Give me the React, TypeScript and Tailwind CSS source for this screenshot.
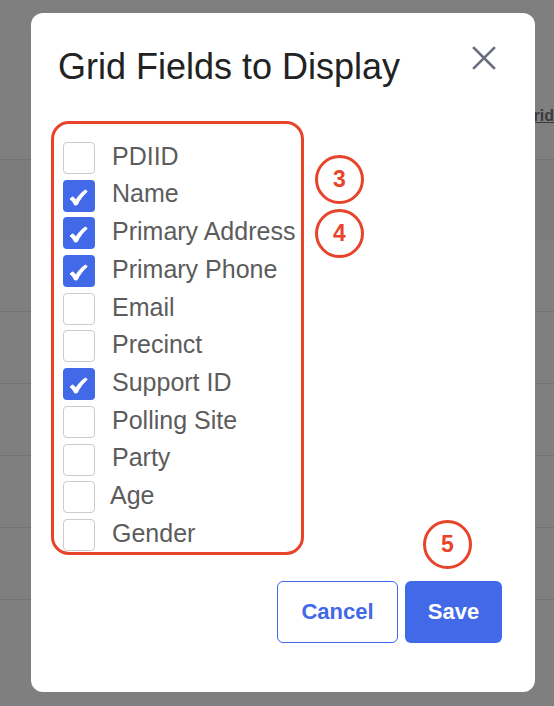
import React, { useState } from 'react';

interface Field {
  label: string;
  checked: boolean;
}

const INITIAL_FIELDS: Field[] = [
  { label: "PDIID", checked: false },
  { label: "Name", checked: true },
  { label: "Primary Address", checked: true },
  { label: "Primary Phone", checked: true },
  { label: "Email", checked: false },
  { label: "Precinct", checked: false },
  { label: "Support ID", checked: true },
  { label: "Polling Site", checked: false },
  { label: "Party", checked: false },
  { label: "Age", checked: false },
  { label: "Gender", checked: false },
];

// brush-style check mark
const CheckMark = () => (
  <svg width="19" height="17" viewBox="0 0 19 17" fill="white" stroke="white" strokeWidth="1" strokeLinejoin="round">
    <path d="M1 10 C2 8.6 3.2 7.9 4 8 C5 8.3 6 9.9 6.8 11.2 C9.2 7.2 12.6 3.2 16.6 0.9 L18.2 2.6 C14 6.2 10.5 11 8.2 15.8 L5.6 16 C4.6 13.6 2.8 11.4 1 10 Z" />
  </svg>
);

const Badge: React.FC<{ n: number; className: string }> = ({ n, className }) => (
  <div
    className={`absolute w-[49px] h-[49px] rounded-full border-[3.5px] border-[#e8432b] flex items-center justify-center text-[23px] font-bold text-[#e8432b] leading-none ${className}`}
  >
    {n}
  </div>
);

export default function App() {
  const [fields, setFields] = useState<Field[]>(INITIAL_FIELDS);

  const toggle = (idx: number) => {
    const next = [...fields];
    next[idx] = { ...next[idx], checked: !next[idx].checked };
    setFields(next);
  };

  return (
    <div className="relative h-[706px] w-full overflow-hidden bg-white font-['Liberation_Sans',Arial,sans-serif]">
      {/* page behind the dialog */}
      <div className="h-[160px] border-b border-[#e6e6e6] pt-[104px] flex justify-end whitespace-nowrap">
        <span className="text-[16px] leading-[24px] font-bold text-[#747474] underline">Grid</span>
      </div>
      <div className="h-[80px] bg-[#f9f9f9]" />
      <div className="h-[72px] border-b border-[#e6e6e6]" />
      <div className="h-[72px] border-b border-[#e6e6e6]" />
      <div className="h-[72px] border-b border-[#e6e6e6]" />
      <div className="h-[72px] border-b border-[#e6e6e6]" />
      <div className="h-[72px] border-b border-[#e6e6e6]" />

      {/* backdrop */}
      <div className="absolute inset-0 bg-black/50" />

      {/* dialog */}
      <div className="absolute left-[31px] top-[13px] w-[504px] h-[679px] rounded-[12px] bg-white">
        <div className="flex items-start justify-between pl-[27px] pr-[39px] pt-[36px]">
          <h2 className="text-[36px] leading-[36px] text-[#222222]">Grid Fields to Display</h2>
          <button className="-mt-[3px] text-[#6b6d80]">
            <svg width="24" height="24" viewBox="0 0 24 24" stroke="currentColor" strokeWidth="2.6" strokeLinecap="square">
              <path d="M2 2 L22 22 M22 2 L2 22" />
            </svg>
          </button>
        </div>

        <div className="mt-[57px] pl-[32px] flex flex-col gap-[5.7px]">
          {fields.map((f, idx) => (
            <label key={f.label} className="flex items-center h-[32px] cursor-pointer" onClick={() => toggle(idx)}>
              {f.checked ? (
                <span className="w-[32px] h-[32px] rounded-[4px] bg-[#4169e8] flex items-center justify-center pt-[3px] pr-[2px]">
                  <CheckMark />
                </span>
              ) : (
                <span className="w-[32px] h-[32px] rounded-[4px] border border-[#cccccc] bg-white" />
              )}
              <span className={`${f.label === 'Age' ? 'ml-[15px]' : 'ml-[17px]'} -mt-[3px] text-[25px] text-[#5c5c5c] whitespace-nowrap`}>
                {f.label}
              </span>
            </label>
          ))}
        </div>

        <div className="mt-[30px] flex justify-end gap-[7px] pr-[33px]">
          <button className="w-[121px] h-[62px] rounded-[6px] border border-[#4169e8] bg-white text-[22px] font-bold text-[#4169e8]">
            Cancel
          </button>
          <button className="w-[97px] h-[62px] rounded-[6px] bg-[#4169e8] text-[22px] font-bold text-white">
            Save
          </button>
        </div>

        {/* annotations */}
        <div className="absolute left-[20px] top-[108px] w-[253px] h-[434px] rounded-[18px] border-[3.5px] border-[#e8432b]" />
        <Badge n={3} className="left-[284px] top-[142px]" />
        <Badge n={4} className="left-[284px] top-[196px]" />
        <Badge n={5} className="left-[392px] top-[507px]" />
      </div>
    </div>
  );
}
